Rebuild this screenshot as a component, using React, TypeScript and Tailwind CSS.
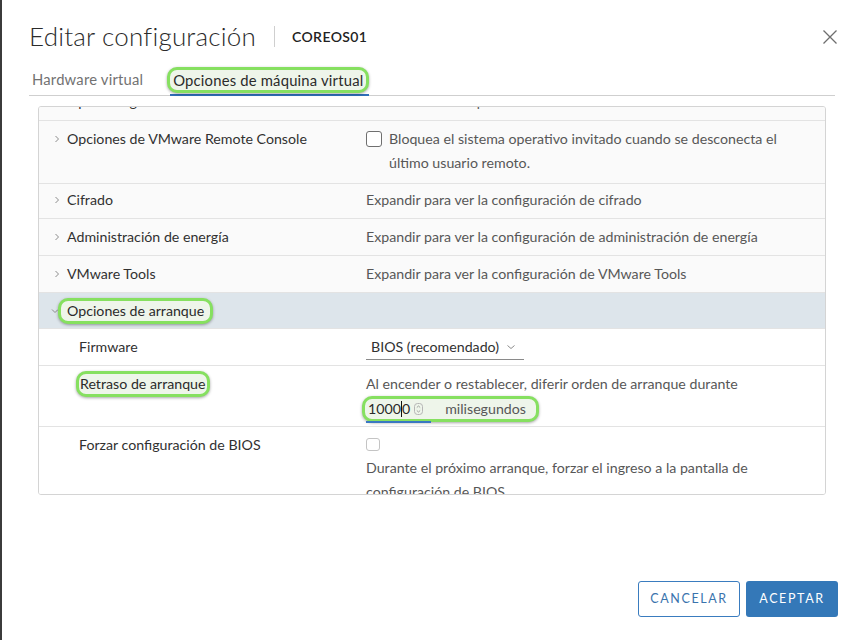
import React from 'react';

const font = { fontFamily: 'Lato, "Open Sans", sans-serif' };

const Chevron: React.FC<{ open?: boolean }> = ({ open }) => (
  <svg width="10" height="10" viewBox="0 0 10 10" className="shrink-0 mt-[7px]">
    {open ? (
      <path d="M2 3.5 L5 6.5 L8 3.5" fill="none" stroke="#8c8c8c" strokeWidth="1" />
    ) : (
      <path d="M3.5 2 L6.5 5 L3.5 8" fill="none" stroke="#8c8c8c" strokeWidth="1" />
    )}
  </svg>
);

// annotation ring drawn around some items in the screenshot
const Ring: React.FC<{ className?: string; children: React.ReactNode }> = ({ className = '', children }) => (
  <span
    className={`inline-flex items-center border-[3px] border-[#86e060] bg-[#eef5ea] rounded-[10px] shadow-[0_1px_3px_rgba(0,0,0,0.35)] ${className}`}
  >
    {children}
  </span>
);

type RowProps = {
  h: string;
  bg?: string;
  pt?: string;
  chevron?: 'open' | 'closed';
  label: React.ReactNode;
  children?: React.ReactNode;
  sub?: boolean;
};

const Row: React.FC<RowProps> = ({ h, bg = 'bg-[#fafafa]', pt = 'pt-[6px]', chevron, label, children, sub }) => (
  <div className={`flex border-b border-[#e3e3e3] ${h} ${bg}`}>
    <div className={`w-[327px] shrink-0 flex ${pt} ${sub ? 'pl-[40px]' : 'pl-[13px]'}`}>
      {chevron && <Chevron open={chevron === 'open'} />}
      <div className={`${chevron ? 'ml-[5px]' : ''} leading-[24px] text-[#313131]`}>{label}</div>
    </div>
    <div className={`flex-1 ${pt} leading-[24px] text-[#575757] pr-2`}>{children}</div>
  </div>
);

export default function App() {
  return (
    <div className="w-[861px] h-[640px] bg-white border-l-2 border-[#3b3b3b] flex flex-col overflow-hidden text-[14.2px]" style={font}>
      <div className="pl-[27px] pr-[23px] flex flex-col flex-1">
        {/* header */}
        <div className="flex items-center h-[32px] mt-[20px]">
          <h1 className="text-[26px] font-light text-[#2b2b2b] leading-[32px] tracking-[0.2px]">Editar configuración</h1>
          <div className="w-px h-[21px] bg-[#cfcfcf] ml-[18px] mr-[17px]" />
          <span className="text-[14px] font-semibold text-[#222] tracking-[0.4px]">COREOS01</span>
          <button className="ml-auto mt-[2px]">
            <svg width="16" height="16" viewBox="0 0 16 16">
              <path d="M1.5 1.5 L14.5 14.5 M14.5 1.5 L1.5 14.5" stroke="#6e6e6e" strokeWidth="1.3" />
            </svg>
          </button>
        </div>

        {/* tabs */}
        <div className="flex items-end mt-[15px] border-b border-[#cfcfcf] w-[806px] text-[14.8px] h-[29px]">
          <div className="pl-[3px] pb-[5px] text-[#727272] tracking-[0.2px]">Hardware virtual</div>
          <div className="ml-[24px] relative">
            <Ring className="px-[3px] h-[26px] text-[#2b2b2b] tracking-[0.2px]">Opciones de máquina virtual</Ring>
            <div className="h-[2px] bg-[#2f6fb8] ml-[3px] -mb-px mt-[1px]" />
          </div>
        </div>

        {/* settings panel */}
        <div className="mt-[10px] ml-[9px] w-[788px] h-[389px] border border-[#d4d4d4] rounded-[3px] overflow-hidden">
          <div className="h-[14px] overflow-hidden border-b border-[#e3e3e3] bg-[#fafafa] flex text-[#313131]">
            <div className="w-[327px] shrink-0 pl-[28px] -mt-[17px] leading-[24px]">Opciones generales</div>
            <div className="-mt-[17px] leading-[24px] text-[#575757]">Nombre de la máquina virtual: COREOS01</div>
          </div>

          <Row h="h-[63px]" chevron="closed" label="Opciones de VMware Remote Console">
            <div className="flex">
              <span className="w-[16px] h-[16px] border border-[#6f6f6f] rounded-[3px] bg-white shrink-0 mt-[4px] mr-[7px]" />
              <span className="text-[#575757]">
                Bloquea el sistema operativo invitado cuando se desconecta el
                <br />
                último usuario remoto.
              </span>
            </div>
          </Row>
          <Row h="h-[35px]" pt="pt-[4px]" chevron="closed" label="Cifrado">
            Expandir para ver la configuración de cifrado
          </Row>
          <Row h="h-[37px]" chevron="closed" label="Administración de energía">
            Expandir para ver la configuración de administración de energía
          </Row>
          <Row h="h-[37px]" chevron="closed" label="VMware Tools">
            Expandir para ver la configuración de VMware Tools
          </Row>

          {/* expanded section */}
          <div className="flex border-b border-[#e3e3e3] h-[36px] bg-[#dde5eb] pl-[11px]">
            <div className="flex items-start pt-[6px]">
              <Chevron open />
              <Ring className="-ml-[2px] -mt-[1px] px-[6px] h-[26px] text-[#2b2b2b]">Opciones de arranque</Ring>
            </div>
          </div>

          <Row h="h-[37px]" bg="bg-white" sub label="Firmware">
            <div className="inline-flex items-center border-b border-[#8a8a8a] w-[158px] pl-[5px] h-[24px] text-[#313131]">
              BIOS (recomendado)
              <svg width="10" height="10" viewBox="0 0 10 10" className="ml-[7px]">
                <path d="M1.5 3.5 L5 6.5 L8.5 3.5" fill="none" stroke="#8c8c8c" strokeWidth="1" />
              </svg>
            </div>
          </Row>

          <Row
            h="h-[61px]"
            bg="bg-white"
            sub
            label={<Ring className="-ml-[3px] -mt-[1px] px-[1px] h-[26px] text-[#2b2b2b]">Retraso de arranque</Ring>}
          >
            <div>Al encender o restablecer, diferir orden de arranque durante</div>
            <div className="relative">
              <Ring className="-ml-[4px] h-[26px] w-[177px] pl-[3px] text-[#2b2b2b]">
                <span>1000</span>
                <span className="w-px h-[16px] bg-[#111]" />
                <span>0</span>
                <svg width="9" height="12" viewBox="0 0 9 12" className="ml-[4px]">
                  <rect x="0.5" y="0.5" width="8" height="11" rx="3" fill="none" stroke="#b5b5b5" />
                  <path d="M2.8 4.5 L4.5 3 L6.2 4.5 M2.8 7.5 L4.5 9 L6.2 7.5" fill="none" stroke="#8c8c8c" strokeWidth="0.8" />
                </svg>
                <span className="ml-[22px] text-[#575757]">milisegundos</span>
              </Ring>
              <div className="absolute left-0 top-[25px] w-[65px] h-[2px] bg-[#3a78c2]" />
            </div>
          </Row>

          <Row h="h-[80px]" bg="bg-white" sub label="Forzar configuración de BIOS">
            <span className="block w-[14px] h-[13px] border border-[#c4c4c4] rounded-[3px] mt-[5px] mb-[5px]" />
            <div>Durante el próximo arranque, forzar el ingreso a la pantalla de</div>
            <div>configuración de BIOS</div>
          </Row>
        </div>

        {/* footer */}
        <div className="mt-auto mb-[23px] flex justify-end gap-[6px]">
          <button className="h-[36px] w-[102px] border border-[#3a7cbf] rounded-[3px] text-[#3a73ad] text-[12.5px] tracking-[1.6px] bg-white">
            CANCELAR
          </button>
          <button className="h-[36px] w-[92px] rounded-[3px] bg-[#3478b8] text-white text-[12.5px] tracking-[1.6px]">
            ACEPTAR
          </button>
        </div>
      </div>
    </div>
  );
}
